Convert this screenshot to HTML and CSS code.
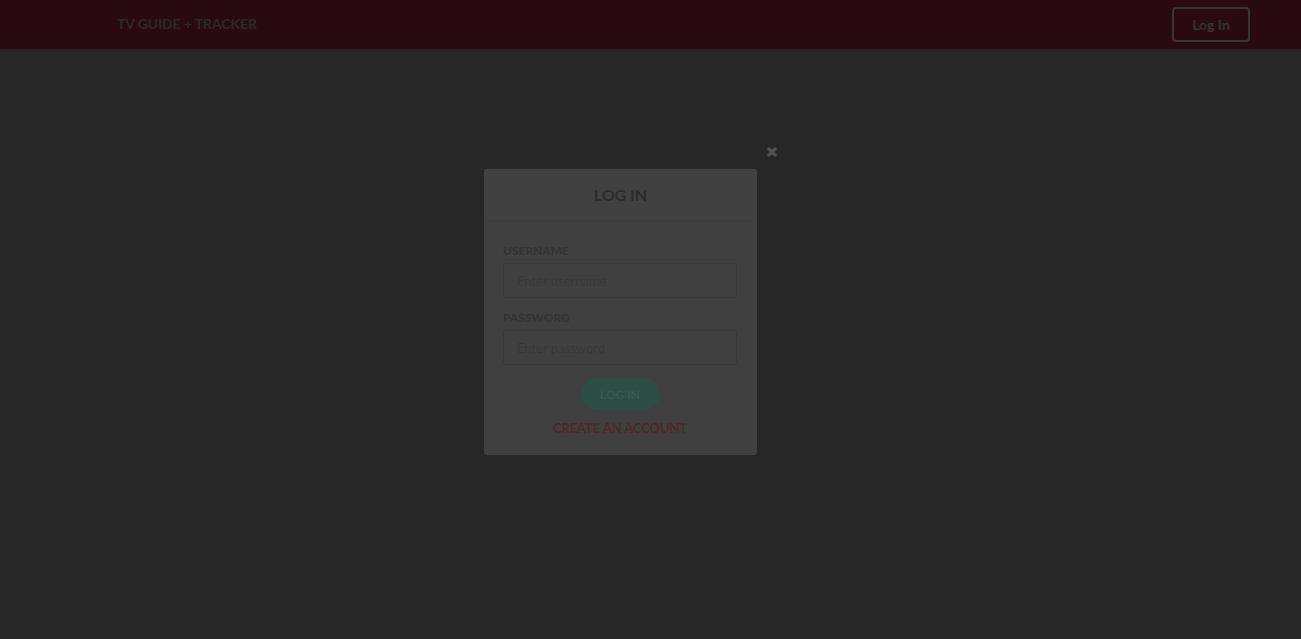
FILE: index.html
```html
<!DOCTYPE html>
<html>
<head>
<meta charset="utf-8">
<link rel="stylesheet" href="styles.css">
</head>
<body>
<header class="topbar">
  <div class="brand">TV GUIDE + TRACKER</div>
  <button class="login-btn">Log In</button>
</header>
<main class="page"></main>
<div class="overlay">
  <div class="modal-wrap">
    <div class="modal">
      <div class="modal-head">LOG IN</div>
      <form class="modal-body">
        <label class="field-label">USERNAME</label>
        <div class="input">Enter username</div>
        <label class="field-label">PASSWORD</label>
        <div class="input">Enter password</div>
        <div class="actions">
          <span class="submit">LOG IN</span>
          <span class="create">CREATE AN ACCOUNT</span>
        </div>
      </form>
    </div>
    <svg class="close" width="12" height="12" viewBox="0 0 12 12"><path d="M2 2 L10 10 M10 2 L2 10" stroke="#545454" stroke-width="3" stroke-linecap="butt"/></svg>
  </div>
</div>
</body>
</html>
```
FILE: styles.css
```css
html, body {
  margin: 0;
  padding: 0;
  height: 100%;
}
body {
  background: #272727;
  font-family: Lato, "Open Sans", sans-serif;
  position: relative;
  overflow: hidden;
}
.topbar {
  height: 49px;
  background: #290a0f;
  border-bottom: 1px solid #222020;
  display: flex;
  align-items: center;
  justify-content: space-between;
  padding: 0 51px 0 117px;
}
.brand {
  color: #2a2a2a;
  font-weight: 700;
  font-size: 14px;
  letter-spacing: -0.1px;
  margin-top: -2px;
}
.login-btn {
  background: transparent;
  border: 2px solid #363636;
  border-radius: 4px;
  color: #343434;
  font-family: Lato, sans-serif;
  font-weight: 700;
  font-size: 14px;
  width: 78px;
  height: 35px;
  margin-top: -1px;
  padding: 0;
}
.overlay {
  position: absolute;
  inset: 0;
  padding: 169px 0 0 484px;
  box-sizing: border-box;
}
.modal-wrap {
  position: relative;
  width: 273px;
}
.modal {
  background: #404040;
  border-radius: 3px;
  width: 273px;
  height: 286px;
  box-sizing: border-box;
}
.modal-head {
  height: 52px;
  border-bottom: 1px solid #3d3d3d;
  background: #414141;
  border-radius: 3px 3px 0 0;
  display: flex;
  align-items: center;
  justify-content: center;
  color: #2b2b2b;
  font-weight: 700;
  font-size: 16px;
  box-sizing: border-box;
  padding-bottom: 1px;
}
.modal-body {
  padding: 22px 20px 0 19px;
  display: flex;
  flex-direction: column;
}
.field-label {
  color: #333333;
  font-weight: 700;
  font-size: 12px;
  line-height: 15px;
  margin-bottom: 5px;
}
.input {
  height: 35px;
  border: 1px solid #3a3a3a;
  border-radius: 3px;
  box-sizing: border-box;
  padding-left: 13px;
  display: flex;
  align-items: center;
  color: #383838;
  font-size: 13px;
  margin-bottom: 12px;
}
.actions {
  display: flex;
  flex-direction: column;
  align-items: center;
  margin-top: 1px;
}
.submit {
  width: 79px;
  height: 32px;
  border-radius: 16px;
  background: #2d4e45;
  color: #39584f;
  font-weight: 700;
  font-size: 12px;
  display: flex;
  align-items: center;
  justify-content: center;
}
.create {
  margin-top: 10px;
  color: #4f272c;
  font-weight: 700;
  font-size: 13px;
  letter-spacing: -0.1px;
}
.close {
  position: absolute;
  left: 282px;
  top: -23px;
}
```
